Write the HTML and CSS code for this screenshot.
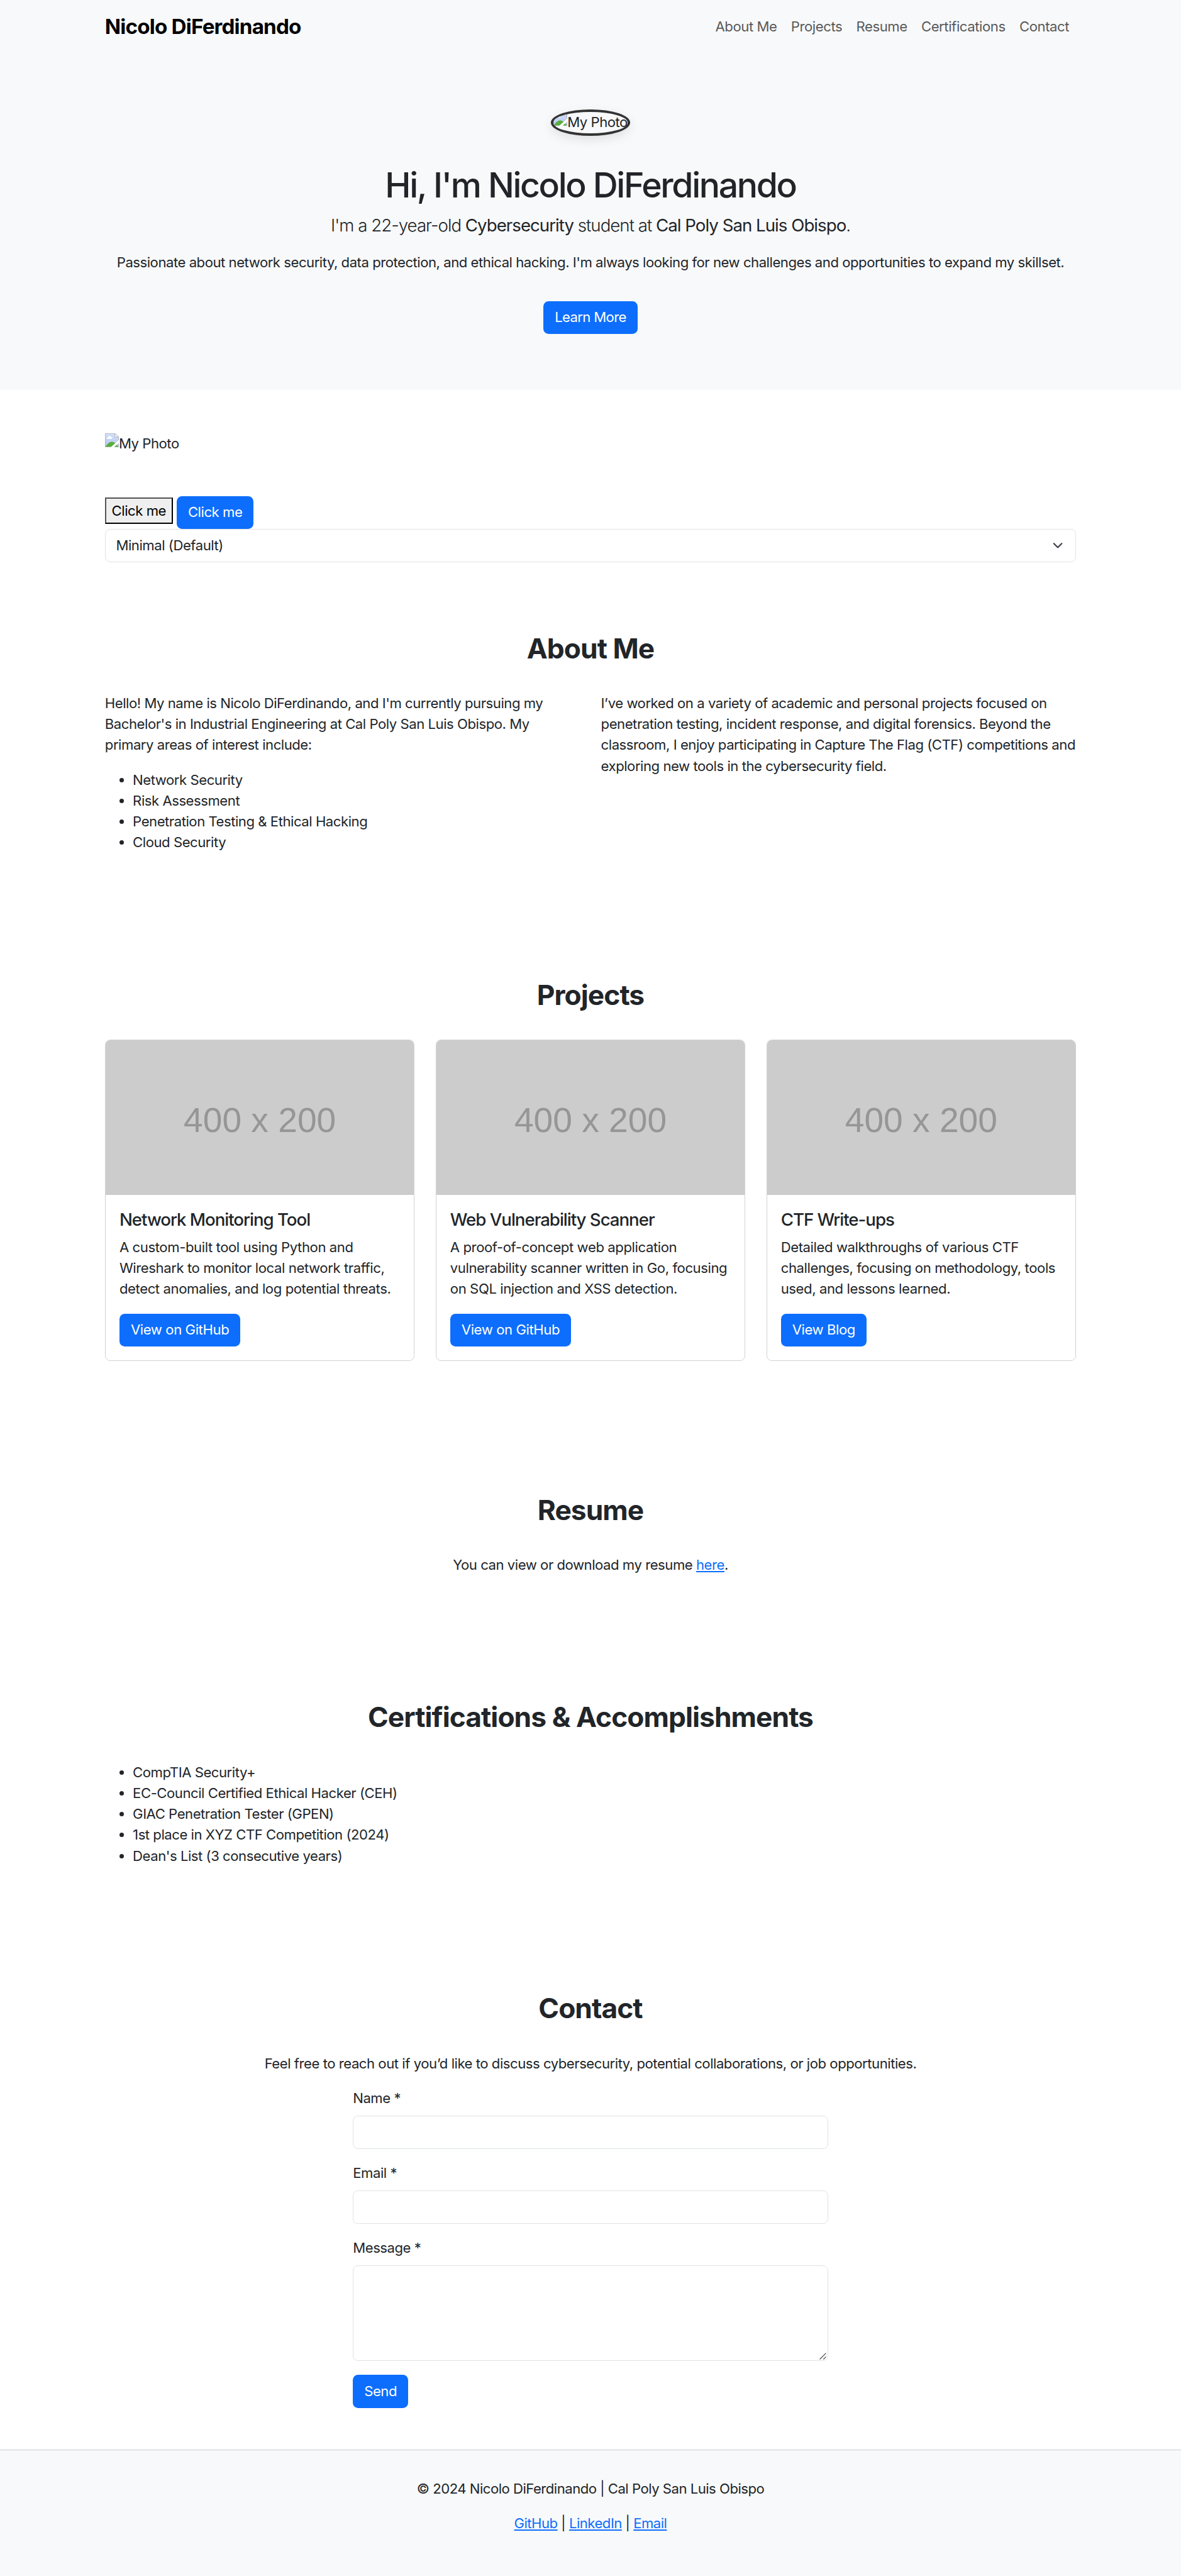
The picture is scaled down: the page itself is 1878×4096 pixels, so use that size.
FILE: index.html
```html
<!DOCTYPE html>
<html lang="en">
<head>
<meta charset="utf-8">
<title>Nicolo DiFerdinando</title>
<link rel="stylesheet" href="styles.css">
</head>
<body>
<svg class="defs" width="0" height="0" aria-hidden="true">
  <defs>
    <linearGradient id="sky" x1="0" y1="0" x2="0" y2="1"><stop offset="0" stop-color="#d3e1fb"/><stop offset="1" stop-color="#b3c6ef"/></linearGradient>
    <symbol id="missing" viewBox="0 0 16 16">
      <path d="M.25.25H11.2L15.75 4.2V15.75H.25Z" fill="url(#sky)" stroke="#9b9b9b" stroke-width=".5"/>
      <path d="M11.2.3V4.2H15.7Z" fill="#fff" stroke="#9b9b9b" stroke-width=".5"/>
      <path d="M2 6.4C2 5 3 4.500 3.700 4.600C4 2.600 6.400 2.500 6.900 4.200C7.900 4.300 8.300 5.300 8.200 6.400Z" fill="#fff"/>
      <path d="M.5 15.500C3 11.500 5.500 9.700 7.700 9.700C10 9.700 12.500 11.500 15.400 15.500Z" fill="#5aad3a"/>
      <path d="M16 7.700V11.200L10.200 16H6.500Z" fill="#fff"/>
    </symbol>
  </defs>
</svg>
<nav class="navbar"><div class="container navbar-inner">
  <a class="brand" href="#">Nicolo DiFerdinando</a>
  <div class="nav-links"><a href="#about">About Me</a><a href="#projects">Projects</a><a href="#resume">Resume</a><a href="#certs">Certifications</a><a href="#contact">Contact</a></div>
</div></nav>
<header class="hero">
  <div class="photo-round"><svg class="missing"><use href="#missing"/></svg><span>My Photo</span></div>
  <h1>Hi, I'm Nicolo DiFerdinando</h1>
  <p class="lead">I'm a 22-year-old <strong>Cybersecurity</strong> student at <strong>Cal Poly San Luis Obispo</strong>.</p>
  <p class="tagline">Passionate about network security, data protection, and ethical hacking. I'm always looking for new challenges and opportunities to expand my skillset.</p>
  <a class="btn" href="#about">Learn More</a>
</header>
<div class="container playground">
  <div class="photo-plain"><svg class="missing"><use href="#missing"/></svg><span>My Photo</span></div>
  <div class="button-row"><button class="btn-plain">Click me</button><button class="btn">Click me</button></div>
  <div class="select"><span>Minimal (Default)</span><svg viewBox="0 0 16 16"><path d="m2 5 6 6 6-6" fill="none" stroke="#343a40" stroke-linecap="round" stroke-linejoin="round" stroke-width="2"/></svg></div>
</div>
<section id="about" class="container">
  <h2>About Me</h2>
  <div class="columns">
    <div>
      <p>Hello! My name is Nicolo DiFerdinando, and I'm currently pursuing my Bachelor's in Industrial Engineering at Cal Poly San Luis Obispo. My primary areas of interest include:</p>
      <ul><li>Network Security</li><li>Risk Assessment</li><li>Penetration Testing &amp; Ethical Hacking</li><li>Cloud Security</li></ul>
    </div>
    <div><p>I’ve worked on a variety of academic and personal projects focused on penetration testing, incident response, and digital forensics. Beyond the classroom, I enjoy participating in Capture The Flag (CTF) competitions and exploring new tools in the cybersecurity field.</p></div>
  </div>
</section>
<section id="projects" class="container">
  <h2>Projects</h2>
  <div class="cards">
    <article class="card"><div class="thumb">400 x 200</div><div class="card-body">
      <h5>Network Monitoring Tool</h5>
      <p>A custom-built tool using Python and Wireshark to monitor local network traffic, detect anomalies, and log potential threats.</p>
      <a class="btn" href="#">View on GitHub</a></div></article>
    <article class="card"><div class="thumb">400 x 200</div><div class="card-body">
      <h5>Web Vulnerability Scanner</h5>
      <p>A proof-of-concept web application vulnerability scanner written in Go, focusing on SQL injection and XSS detection.</p>
      <a class="btn" href="#">View on GitHub</a></div></article>
    <article class="card"><div class="thumb">400 x 200</div><div class="card-body">
      <h5>CTF Write-ups</h5>
      <p>Detailed walkthroughs of various CTF challenges, focusing on methodology, tools used, and lessons learned.</p>
      <a class="btn" href="#">View Blog</a></div></article>
  </div>
</section>
<section id="resume" class="container">
  <h2>Resume</h2>
  <p class="center">You can view or download my resume <a href="#">here</a>.</p>
</section>
<section id="certs" class="container">
  <h2>Certifications &amp; Accomplishments</h2>
  <ul><li>CompTIA Security+</li><li>EC-Council Certified Ethical Hacker (CEH)</li><li>GIAC Penetration Tester (GPEN)</li><li>1st place in XYZ CTF Competition (2024)</li><li>Dean's List (3 consecutive years)</li></ul>
</section>
<section id="contact" class="container contact">
  <h2>Contact</h2>
  <p class="center">Feel free to reach out if you’d like to discuss cybersecurity, potential collaborations, or job opportunities.</p>
  <form>
    <label for="name">Name *</label><input id="name" type="text">
    <label for="email">Email *</label><input id="email" type="email">
    <label for="message">Message *</label>
    <div class="message-box"><textarea id="message"></textarea><svg class="grip" viewBox="0 0 8 8"><path d="M.4 7.600 7.600.4M4.600 7.600 7.600 4.600" stroke="#444" stroke-width=".8"/></svg></div>
    <button class="btn" type="button">Send</button>
  </form>
</section>
<footer>
  <p>© 2024 Nicolo DiFerdinando | Cal Poly San Luis Obispo</p>
  <p><a href="#">GitHub</a> | <a href="#">LinkedIn</a> | <a href="#">Email</a></p>
</footer>
</body>
</html>
```
FILE: styles.css
```css
*, *::before, *::after { box-sizing: border-box; }
html { font-size: 22.141px; }
body { margin: 0; background: #fff; color: #212529; font: 400 1rem/1.5 Inter, sans-serif; letter-spacing: -0.0213em; }
h1, h2, h5, p, ul { margin: 0; }
a { color: #0d6efd; }
.defs { display: block; }
.container { width: 71.25rem; margin: 0 auto; padding: 0 .75rem; }
.navbar { background: #f8f9fa; padding: .5rem 0; }
.navbar-inner { display: flex; justify-content: space-between; align-items: center; }
.brand { font-size: 1.5rem; font-weight: 700; color: #000; text-decoration: none; padding: .3125rem 0; letter-spacing: -0.0245em; }
.nav-links { display: flex; letter-spacing: -0.019em; }
.nav-links a { padding: .5rem; color: #595a5a; text-decoration: none; }
.hero { background: #f8f9fa; padding: 4rem 0; display: flex; flex-direction: column; align-items: center; white-space: nowrap; }
.photo-round { display: flex; width: 5.6875rem; height: 1.875rem; border: .1875rem solid #333; border-radius: 50%; overflow: hidden; box-shadow: 0 .25rem .75rem rgba(0,0,0,.1); }
.missing { width: 1rem; height: 1rem; flex: none; }
.photo-plain { display: flex; height: 1.5rem; }
h1 { margin: 2.045rem 0 .455rem; font-size: 2.5rem; font-weight: 500; line-height: 1.2; letter-spacing: -0.0425em; }
.lead { font-size: 1.25rem; font-weight: 300; margin-bottom: 1rem; letter-spacing: -0.0355em; }
.lead strong { font-weight: 400; }
.tagline { margin-bottom: 2rem; letter-spacing: -0.0216em; }
.btn { display: inline-block; height: 2.375rem; padding: .4375rem .8125rem; border: 0; border-radius: .375rem; background: #0d6efd; color: #fff; font: inherit; letter-spacing: inherit; text-decoration: none; white-space: nowrap; }
.hero .btn { letter-spacing: -0.03em; }
.playground { padding-top: 3.125rem; }
.button-row { display: flex; align-items: flex-start; gap: .28rem; margin-top: 3rem; }
.btn-plain { margin-top: .125rem; width: 4.875rem; height: 1.875rem; padding: 0; border: .125rem outset #000; background: #efefef; color: #000; font: inherit; letter-spacing: inherit; }
.select { display: flex; align-items: center; justify-content: space-between; height: 2.375rem; padding: 0 .75rem; border: 1px solid #dee2e6; border-radius: .375rem; margin-bottom: 1rem; }
.select svg { width: 1rem; height: .75rem; }
section.container { padding-top: 4rem; padding-bottom: 4rem; }
h2 { font-size: 2rem; line-height: 1.2; font-weight: 700; text-align: center; margin-bottom: 2rem; letter-spacing: -0.021em; }
section ul { padding-left: 2rem; margin-bottom: 1rem; }
section p { margin-bottom: 1rem; }
.center { text-align: center; }
.columns { display: grid; grid-template-columns: 1fr 1fr; gap: 1.5rem; }
.cards { display: grid; grid-template-columns: repeat(3, 1fr); gap: 1.5rem; margin-bottom: 1.5rem; }
.card { border: 1px solid #d2d2d2; border-radius: .375rem; overflow: hidden; }
.thumb { height: 11.12rem; padding-top: .4rem; background: #ccc; color: #969696; display: flex; align-items: center; justify-content: center; font: 2.49rem/1 "Liberation Sans", sans-serif; letter-spacing: 0; }
.card-body { padding: 1rem; letter-spacing: -0.019em; }
h5 { font-size: 1.25rem; font-weight: 500; line-height: 1.2; margin-bottom: .5rem; letter-spacing: -0.0375em; }
.card-body .btn { display: block; width: max-content; }
section.contact { padding-bottom: 3rem; }
form { width: 34.125rem; margin: 0 auto; display: flex; flex-direction: column; align-items: flex-start; }
label { margin-bottom: .5rem; }
input, textarea { display: block; width: 100%; height: 2.375rem; margin: 0 0 1rem; border: 1px solid #dee2e6; border-radius: .375rem; background: #fff; font: inherit; }
.message-box { position: relative; width: 100%; }
textarea { height: 6.875rem; resize: none; }
.grip { position: absolute; right: .125rem; bottom: 1.125rem; width: .5rem; height: .5rem; }
footer { border-top: 1px solid #ccc; background: #f8f9fa; padding: 2rem 0 2.05rem; text-align: center; letter-spacing: -0.023em; }
footer p { margin-bottom: 1rem; }
```
